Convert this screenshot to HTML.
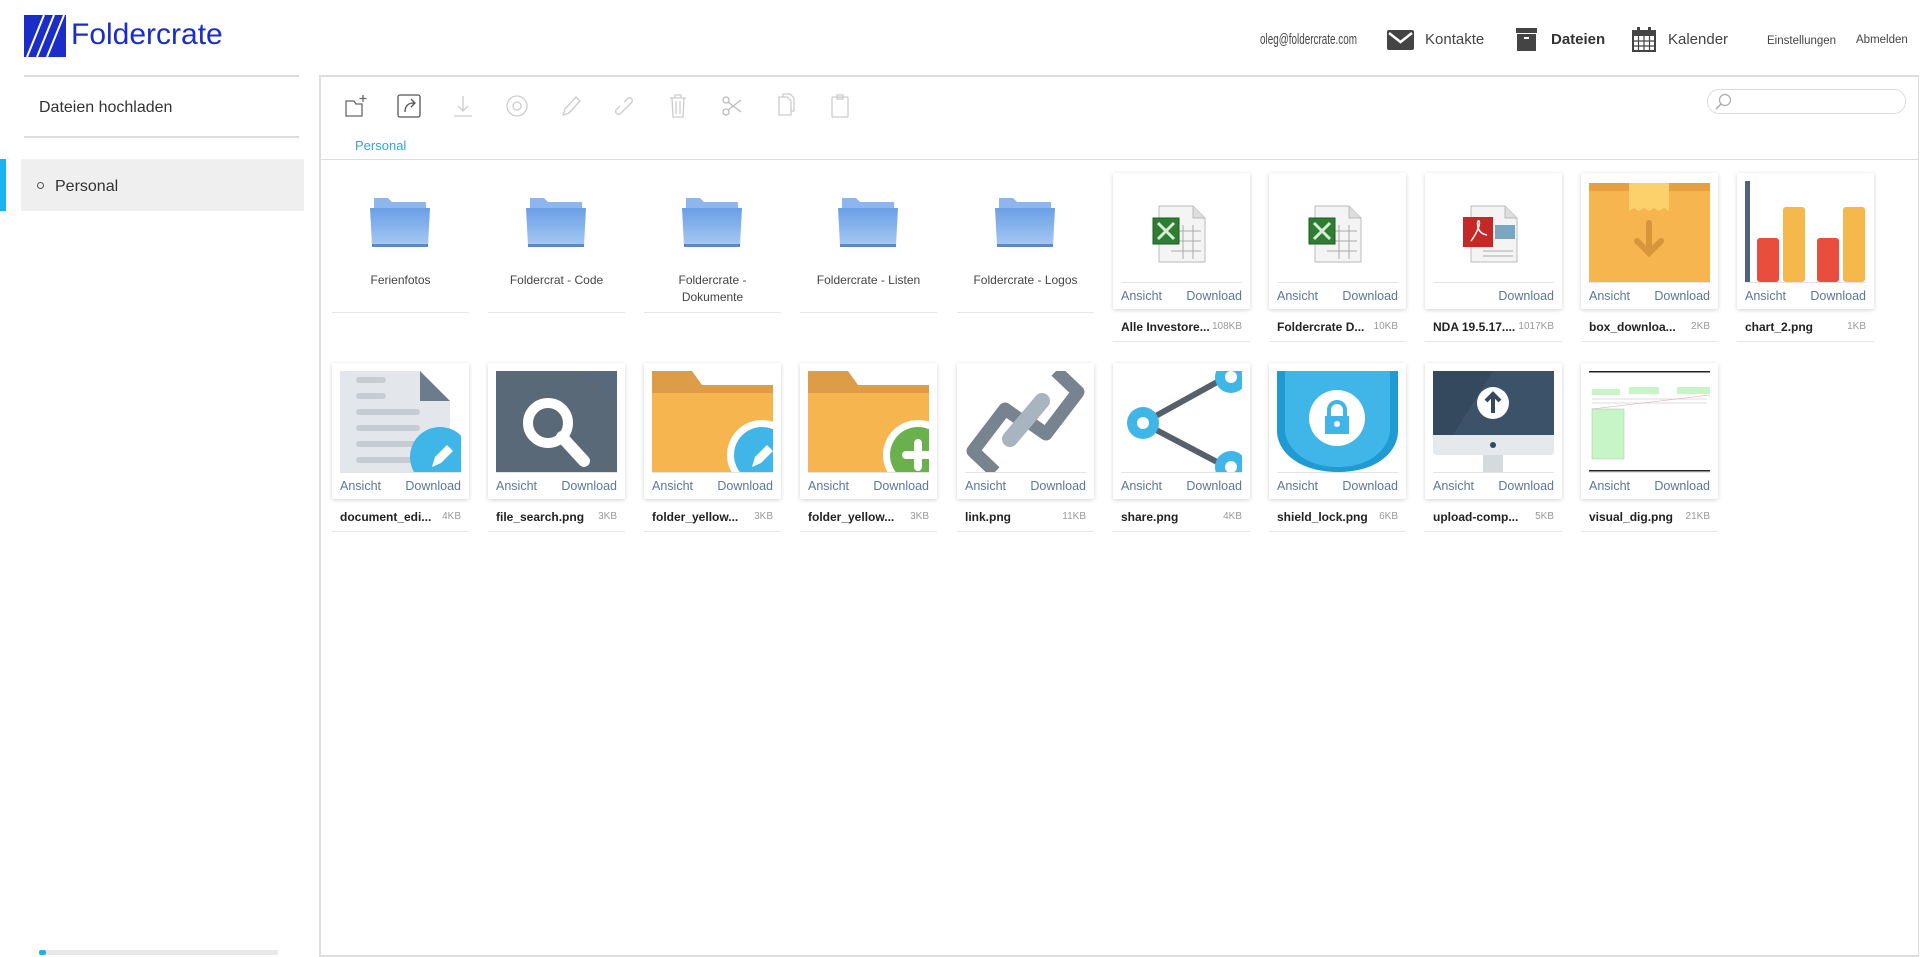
<!DOCTYPE html>
<html><head><meta charset="utf-8"><style>
*{box-sizing:border-box;margin:0;padding:0}
body{width:1920px;height:957px;position:relative;overflow:hidden;background:#fff;font-family:"Liberation Sans",Arial,sans-serif;color:#333}
.a{position:absolute}
.nav{position:absolute;top:31px;font-size:15px;color:#444;white-space:nowrap}
.card{position:absolute;width:137px;height:136px;background:#fff;box-shadow:0 1px 4px rgba(0,0,0,.18);border-radius:2px}
.card .img{position:absolute;left:8px;top:8px;width:121px;height:101px;overflow:hidden}
.card .div{position:absolute;left:8px;right:8px;top:109px;border-top:1px solid #e4e4e4}
.card .l1,.card .l2{position:absolute;top:116px;font-size:12.5px;color:#5b7799}
.card .l1{left:8px}.card .l2{right:8px}
.fn{position:absolute;width:137px;height:22px;border-bottom:1px solid #e6e6e6}
.fn b{position:absolute;left:8px;top:0;font-size:12px;color:#222}
.fn i{position:absolute;right:8px;top:1px;font-size:10px;font-style:normal;color:#999}
.fold{position:absolute;width:137px;height:140px;border-bottom:1px solid #e6e6e6;text-align:center}
.fold svg{position:absolute;left:36px;top:0}
.fold span{position:absolute;left:0;right:0;top:99px;font-size:12px;color:#444;line-height:17px}
.tb{position:absolute;top:93px}
</style></head><body>
<!-- header -->
<svg class="a" style="left:24px;top:15px" width="42" height="42" viewBox="0 0 42 42"><rect width="42" height="42" fill="#1a2dc9"/><path d="M3 42 L20 0 M13 42 L30 0 M23 42 L40 0" stroke="#fff" stroke-width="2"/></svg>
<div class="a" style="left:71px;top:18px;font-size:30px;color:#1a2dc9">Foldercrate</div>
<div class="nav" style="left:1260px;font-size:15px;top:31px;transform:scaleX(.66);transform-origin:0 0">oleg@foldercrate.com</div>
<svg class="a" style="left:1387px;top:30px" width="27" height="20" viewBox="0 0 27 20"><rect width="27" height="20" rx="2" fill="#444"/><path d="M2 3 L13.5 12 L25 3" stroke="#fff" stroke-width="2.5" fill="none"/></svg>
<div class="nav" style="left:1425px">Kontakte</div>
<svg class="a" style="left:1516px;top:28px" width="21" height="23" viewBox="0 0 21 23"><rect width="21" height="5" fill="#444"/><rect x="1" y="6" width="19" height="17" fill="#444"/><rect x="8" y="9" width="5" height="2" fill="#fff"/></svg>
<div class="nav" style="left:1551px;font-weight:bold;color:#333">Dateien</div>
<svg class="a" style="left:1632px;top:27px" width="24" height="25" viewBox="0 0 24 25"><rect x="1" y="4" width="22" height="20" fill="none" stroke="#444" stroke-width="2"/><rect x="1" y="4" width="22" height="5" fill="#444"/><path d="M1 14H23M1 19H23M6.5 9V24M12 9V24M17.5 9V24" stroke="#444" stroke-width="1.2"/><rect x="5" y="0" width="3" height="6" fill="#444"/><rect x="16" y="0" width="3" height="6" fill="#444"/></svg>
<div class="nav" style="left:1668px">Kalender</div>
<div class="nav" style="left:1767px;font-size:11.5px;top:35px">Einstellungen</div>
<div class="nav" style="left:1856px;font-size:11.5px;top:34px">Abmelden</div>
<!-- sidebar -->
<div class="a" style="left:24px;top:75px;width:275px;border-top:2px solid #ddd"></div>
<div class="a" style="left:39px;top:99px;font-size:16px;color:#333">Dateien hochladen</div>
<div class="a" style="left:24px;top:136px;width:275px;border-top:2px solid #ddd"></div>
<div class="a" style="left:0;top:159px;width:6px;height:52px;background:#1ab3ef"></div>
<div class="a" style="left:21px;top:159px;width:283px;height:52px;background:#efefef"></div>
<div class="a" style="left:37px;top:182px;width:7px;height:7px;border:1px solid #555;border-radius:50%"></div>
<div class="a" style="left:55px;top:178px;font-size:16px;color:#333">Personal</div>
<div class="a" style="left:39px;top:950px;width:239px;height:5px;background:#e8e8e8;border-radius:2px"></div>
<div class="a" style="left:39px;top:950px;width:7px;height:5px;background:#1ab3ef;border-radius:2px"></div>
<!-- main panel -->
<div class="a" style="left:319px;top:75px;width:1600px;height:882px;border:2px solid #ddd;border-right:1px solid #ddd"></div>
<div class="a" style="left:321px;top:159px;width:1597px;border-top:1px solid #ddd"></div>
<div class="a" style="left:355px;top:138px;font-size:13px;color:#2fa9cf">Personal</div>
<div class="a" style="left:1707px;top:89px;width:199px;height:25px;border:1px solid #ddd;border-radius:12px"></div>
<svg class="a" style="left:1714px;top:93px" width="18" height="18" viewBox="0 0 18 18"><circle cx="11" cy="7" r="5.5" fill="none" stroke="#aaa" stroke-width="1.2"/><path d="M7 11 L2 16" stroke="#aaa" stroke-width="1.5"/></svg>
<!-- toolbar -->
<svg class="tb" style="left:343px" width="26" height="26" viewBox="0 0 26 26"><path d="M3 8h8l2 3h6v12H3z" fill="none" stroke="#666" stroke-width="1.3"/><path d="M20 2v7M16.5 5.5h7" stroke="#666" stroke-width="1.3"/></svg>
<svg class="tb" style="left:396px" width="26" height="26" viewBox="0 0 26 26"><rect x="2" y="2" width="22" height="22" rx="2" fill="none" stroke="#555" stroke-width="1.3"/><path d="M9 19c0-6 3-9 9-9M15 6l4 4-4 4" fill="none" stroke="#555" stroke-width="1.3"/></svg>
<svg class="tb" style="left:450px" width="26" height="26" viewBox="0 0 26 26"><path d="M13 3v15M8 13l5 5 5-5M4 23h18" fill="none" stroke="#ccc" stroke-width="1.3"/></svg>
<svg class="tb" style="left:504px" width="26" height="26" viewBox="0 0 26 26"><circle cx="13" cy="13" r="10" fill="none" stroke="#ccc" stroke-width="1.3"/><circle cx="13" cy="13" r="4" fill="none" stroke="#ccc" stroke-width="1.3"/></svg>
<svg class="tb" style="left:557px" width="26" height="26" viewBox="0 0 26 26"><path d="M6 22l2-6 11-12 4 4-11 12z" fill="none" stroke="#ccc" stroke-width="1.3"/></svg>
<svg class="tb" style="left:611px" width="26" height="26" viewBox="0 0 26 26"><path d="M11 15l-4 4a3 3 0 0 1-4-4l4-4M15 11l4-4a3 3 0 0 0-4-4l-4 4M10 16l6-6" fill="none" stroke="#ccc" stroke-width="1.3" transform="translate(2 2)"/></svg>
<svg class="tb" style="left:665px" width="26" height="26" viewBox="0 0 26 26"><path d="M5 5h16M10 5V2h6v3M7 5l1 19h10l1-19M11 8v13M15 8v13" fill="none" stroke="#ccc" stroke-width="1.3"/></svg>
<svg class="tb" style="left:719px" width="26" height="26" viewBox="0 0 26 26"><circle cx="7" cy="7" r="3" fill="none" stroke="#bbb" stroke-width="1.3"/><circle cx="7" cy="19" r="3" fill="none" stroke="#bbb" stroke-width="1.3"/><path d="M9 9l13 10M9 17l13-10" stroke="#bbb" stroke-width="1.3"/></svg>
<svg class="tb" style="left:773px" width="26" height="26" viewBox="0 0 26 26"><path d="M6 4h8l4 4v14H6z M10 4V1h7l4 4v13h-3" fill="none" stroke="#ccc" stroke-width="1.3"/></svg>
<svg class="tb" style="left:827px" width="26" height="26" viewBox="0 0 26 26"><rect x="5" y="4" width="16" height="20" rx="1" fill="none" stroke="#ccc" stroke-width="1.3"/><rect x="10" y="2" width="6" height="4" fill="none" stroke="#ccc" stroke-width="1.3"/></svg>

<!-- folders row -->
<svg width="0" height="0" style="position:absolute"><defs><linearGradient id="fg" x1="0" y1="0" x2="0" y2="1"><stop offset="0" stop-color="#6a9fe6"/><stop offset="1" stop-color="#a6c9f4"/></linearGradient></defs></svg>
<div class="fold" style="left:332px;top:173px"><svg width="64" height="58" viewBox="0 0 64 58" style="top:21px"><path d="M6 4h14l4 4h34v10H6z" fill="#8db6ee"/><path d="M2 14h60l-2 38H4z" fill="url(#fg)"/><rect x="4" y="50" width="56" height="3" fill="#5b88c9"/></svg><span>Ferienfotos</span></div>
<div class="fold" style="left:488px;top:173px"><svg width="64" height="58" viewBox="0 0 64 58" style="top:21px"><path d="M6 4h14l4 4h34v10H6z" fill="#8db6ee"/><path d="M2 14h60l-2 38H4z" fill="url(#fg)"/><rect x="4" y="50" width="56" height="3" fill="#5b88c9"/></svg><span>Foldercrat - Code</span></div>
<div class="fold" style="left:644px;top:173px"><svg width="64" height="58" viewBox="0 0 64 58" style="top:21px"><path d="M6 4h14l4 4h34v10H6z" fill="#8db6ee"/><path d="M2 14h60l-2 38H4z" fill="url(#fg)"/><rect x="4" y="50" width="56" height="3" fill="#5b88c9"/></svg><span>Foldercrate -<br>Dokumente</span></div>
<div class="fold" style="left:800px;top:173px"><svg width="64" height="58" viewBox="0 0 64 58" style="top:21px"><path d="M6 4h14l4 4h34v10H6z" fill="#8db6ee"/><path d="M2 14h60l-2 38H4z" fill="url(#fg)"/><rect x="4" y="50" width="56" height="3" fill="#5b88c9"/></svg><span>Foldercrate - Listen</span></div>
<div class="fold" style="left:957px;top:173px"><svg width="64" height="58" viewBox="0 0 64 58" style="top:21px"><path d="M6 4h14l4 4h34v10H6z" fill="#8db6ee"/><path d="M2 14h60l-2 38H4z" fill="url(#fg)"/><rect x="4" y="50" width="56" height="3" fill="#5b88c9"/></svg><span>Foldercrate - Logos</span></div>

<!-- row1 cards -->
<div class="card" style="left:1113px;top:173px"><div class="img"><svg width="121" height="101"><path d="M38 25h34l12 12v44H38z" fill="#f4f4f4" stroke="#bbb"/><path d="M72 25v12h12" fill="#ddd" stroke="#bbb"/><path d="M50 50h30M50 60h30M50 70h30M62 44v34M72 44v34" stroke="#aaa"/><rect x="32" y="37" width="26" height="26" fill="#2e7d32" stroke="#1b5e20"/><path d="M37 42l16 16M53 42l-16 16" stroke="#d7ecd7" stroke-width="3"/></svg></div><div class="div"></div><span class="l1">Ansicht</span><span class="l2">Download</span></div>
<div class="card" style="left:1269px;top:173px"><div class="img"><svg width="121" height="101"><path d="M38 25h34l12 12v44H38z" fill="#f4f4f4" stroke="#bbb"/><path d="M72 25v12h12" fill="#ddd" stroke="#bbb"/><path d="M50 50h30M50 60h30M50 70h30M62 44v34M72 44v34" stroke="#aaa"/><rect x="32" y="37" width="26" height="26" fill="#2e7d32" stroke="#1b5e20"/><path d="M37 42l16 16M53 42l-16 16" stroke="#d7ecd7" stroke-width="3"/></svg></div><div class="div"></div><span class="l1">Ansicht</span><span class="l2">Download</span></div>
<div class="card" style="left:1425px;top:173px"><div class="img"><svg width="121" height="101"><path d="M38 25h34l12 12v44H38z" fill="#f4f4f4" stroke="#bbb"/><path d="M72 25v12h12" fill="#ddd" stroke="#bbb"/><path d="M50 70h30M50 75h30" stroke="#aaa"/><rect x="62" y="44" width="20" height="14" fill="#7aa6bf"/><rect x="30" y="36" width="30" height="30" fill="#c62828"/><path d="M38 60c6-8 10-18 8-20s-4 12 8 14" fill="none" stroke="#fff" stroke-width="1.5"/></svg></div><div class="div"></div><span class="l2">Download</span></div>
<div class="card" style="left:1581px;top:173px"><div class="img"><svg width="121" height="101"><path d="M0 8L6 2h109l6 6v93H0z" fill="#f6b54e"/><rect x="0" y="2" width="121" height="8" fill="#e6a040"/><path d="M40 2h40v28l-5 -3-5 3-5-3-5 3-5-3-5 3-5-3-5 3z" fill="#fcd06a"/><path d="M60 42v30M48 60l12 12 12-12" stroke="#d8963a" stroke-width="6" fill="none" stroke-linecap="round"/></svg></div><div class="div"></div><span class="l1">Ansicht</span><span class="l2">Download</span></div>
<div class="card" style="left:1737px;top:173px"><div class="img"><svg width="121" height="101"><rect x="0" y="0" width="5" height="101" fill="#4f6478"/><rect x="12" y="57" width="22" height="44" rx="3" fill="#e94e3c"/><rect x="38" y="26" width="22" height="75" rx="3" fill="#f5b94b"/><rect x="72" y="57" width="22" height="44" rx="3" fill="#e94e3c"/><rect x="98" y="26" width="22" height="75" rx="3" fill="#f5b94b"/></svg></div><div class="div"></div><span class="l1">Ansicht</span><span class="l2">Download</span></div>

<div class="fn" style="left:1113px;top:320px"><b>Alle Investore...</b><i>108KB</i></div>
<div class="fn" style="left:1269px;top:320px"><b>Foldercrate D...</b><i>10KB</i></div>
<div class="fn" style="left:1425px;top:320px"><b>NDA 19.5.17....</b><i>1017KB</i></div>
<div class="fn" style="left:1581px;top:320px"><b>box_downloa...</b><i>2KB</i></div>
<div class="fn" style="left:1737px;top:320px"><b>chart_2.png</b><i>1KB</i></div>

<!-- row2 cards -->
<div class="card" style="left:332px;top:363px"><div class="img"><svg width="121" height="101"><path d="M0 0h80l30 30v71H0z" fill="#e3e6ea"/><path d="M80 0v30h30z" fill="#6b7c8c"/><g fill="#c7ccd3"><rect x="16" y="6" width="30" height="6" rx="3"/><rect x="16" y="22" width="30" height="6" rx="3"/><rect x="16" y="38" width="64" height="6" rx="3"/><rect x="16" y="54" width="64" height="6" rx="3"/><rect x="16" y="70" width="64" height="6" rx="3"/><rect x="16" y="86" width="64" height="6" rx="3"/></g><circle cx="100" cy="86" r="30" fill="#40b6e8"/><path d="M92 96l3-10 12-12 6 6-12 12z" fill="#fff"/></svg></div><div class="div"></div><span class="l1">Ansicht</span><span class="l2">Download</span></div>
<div class="card" style="left:488px;top:363px"><div class="img"><svg width="121" height="101"><rect width="121" height="101" fill="#5a6978"/><path d="M88 0h33v33z" fill="#34495e"/><path d="M88 0l33 33V0z" fill="#7a8c9b" opacity=".5"/><circle cx="52" cy="52" r="20" fill="none" stroke="#fff" stroke-width="10"/><path d="M66 66l22 24" stroke="#fff" stroke-width="12" stroke-linecap="round"/></svg></div><div class="div"></div><span class="l1">Ansicht</span><span class="l2">Download</span></div>
<div class="card" style="left:644px;top:363px"><div class="img"><svg width="121" height="101"><path d="M0 0h40l10 14h71v87H0z" fill="#dc9c48"/><rect y="22" width="121" height="79" fill="#f6b54e"/><circle cx="110" cy="84" r="35" fill="#fff"/><circle cx="110" cy="84" r="28" fill="#40b6e8"/><path d="M100 96l3-10 12-12 6 6-12 12z" fill="#fff"/></svg></div><div class="div"></div><span class="l1">Ansicht</span><span class="l2">Download</span></div>
<div class="card" style="left:800px;top:363px"><div class="img"><svg width="121" height="101"><path d="M0 0h40l10 14h71v87H0z" fill="#dc9c48"/><rect y="22" width="121" height="79" fill="#f6b54e"/><circle cx="110" cy="84" r="35" fill="#fff"/><circle cx="110" cy="84" r="28" fill="#6ab04c"/><path d="M110 72v24M98 84h24" stroke="#fff" stroke-width="8" stroke-linecap="round"/></svg></div><div class="div"></div><span class="l1">Ansicht</span><span class="l2">Download</span></div>
<div class="card" style="left:957px;top:363px"><div class="img"><svg width="121" height="101"><path d="M30 101L8 80l32-42 20 14" fill="none" stroke="#77838e" stroke-width="13" stroke-linejoin="round"/><path d="M91 0l22 21-32 42-20-14" fill="none" stroke="#77838e" stroke-width="13" stroke-linejoin="round"/><path d="M45 68l32-38" stroke="#a8b4c0" stroke-width="16" stroke-linecap="round"/></svg></div><div class="div"></div><span class="l1">Ansicht</span><span class="l2">Download</span></div>
<div class="card" style="left:1113px;top:363px"><div class="img"><svg width="121" height="101"><path d="M22 52L98 10M22 52L98 92" stroke="#55606b" stroke-width="6"/><circle cx="22" cy="52" r="16" fill="#40b6e8"/><circle cx="22" cy="52" r="6" fill="#fff"/><circle cx="110" cy="6" r="16" fill="#40b6e8"/><circle cx="110" cy="6" r="6" fill="#fff"/><circle cx="110" cy="96" r="16" fill="#40b6e8"/><circle cx="110" cy="96" r="6" fill="#fff"/></svg></div><div class="div"></div><span class="l1">Ansicht</span><span class="l2">Download</span></div>
<div class="card" style="left:1269px;top:363px"><div class="img"><svg width="121" height="101"><path d="M0 0h121v60c0 20-20 41-60 41S0 80 0 60z" fill="#1f9bd1"/><path d="M8 0h105v58c0 18-18 38-52 38S8 76 8 58z" fill="#40b6e8"/><circle cx="60" cy="47" r="28" fill="#fff"/><rect x="48" y="45" width="24" height="18" fill="#40b6e8"/><path d="M52 45v-6a8 8 0 0 1 16 0v6" fill="none" stroke="#40b6e8" stroke-width="4"/><circle cx="60" cy="53" r="3" fill="#fff"/></svg></div><div class="div"></div><span class="l1">Ansicht</span><span class="l2">Download</span></div>
<div class="card" style="left:1425px;top:363px"><div class="img"><svg width="121" height="101"><rect x="50" y="80" width="20" height="21" fill="#d5dadf"/><rect x="0" y="0" width="121" height="84" rx="3" fill="#e5e9ec"/><rect x="0" y="0" width="121" height="64" fill="#34495e"/><path d="M60 0h61v64H20z" fill="#3c5268"/><circle cx="60" cy="32" r="16" fill="#fff"/><path d="M60 42V24M53 30l7-7 7 7" stroke="#34495e" stroke-width="4" fill="none"/><circle cx="60" cy="74" r="3" fill="#34495e"/></svg></div><div class="div"></div><span class="l1">Ansicht</span><span class="l2">Download</span></div>
<div class="card" style="left:1581px;top:363px"><div class="img"><svg width="121" height="101"><rect width="121" height="101" fill="#fff"/><rect y="0" width="121" height="1.5" fill="#222"/><rect y="99" width="121" height="1.5" fill="#222"/><rect x="3" y="18" width="28" height="6" fill="#c8f5c8"/><rect x="40" y="16" width="30" height="7" fill="#c8f5c8"/><rect x="88" y="16" width="33" height="7" fill="#c8f5c8"/><path d="M3 28h115M3 32h115" stroke="#bbb" stroke-width=".6"/><rect x="3" y="38" width="32" height="50" fill="#c8f5c8" stroke="#9c9" stroke-width=".5"/><path d="M3 38L121 24" stroke="#e9a" stroke-width=".5"/></svg></div><div class="div"></div><span class="l1">Ansicht</span><span class="l2">Download</span></div>

<div class="fn" style="left:332px;top:510px"><b>document_edi...</b><i>4KB</i></div>
<div class="fn" style="left:488px;top:510px"><b>file_search.png</b><i>3KB</i></div>
<div class="fn" style="left:644px;top:510px"><b>folder_yellow...</b><i>3KB</i></div>
<div class="fn" style="left:800px;top:510px"><b>folder_yellow...</b><i>3KB</i></div>
<div class="fn" style="left:957px;top:510px"><b>link.png</b><i>11KB</i></div>
<div class="fn" style="left:1113px;top:510px"><b>share.png</b><i>4KB</i></div>
<div class="fn" style="left:1269px;top:510px"><b>shield_lock.png</b><i>6KB</i></div>
<div class="fn" style="left:1425px;top:510px"><b>upload-comp...</b><i>5KB</i></div>
<div class="fn" style="left:1581px;top:510px"><b>visual_dig.png</b><i>21KB</i></div>
</body></html>
